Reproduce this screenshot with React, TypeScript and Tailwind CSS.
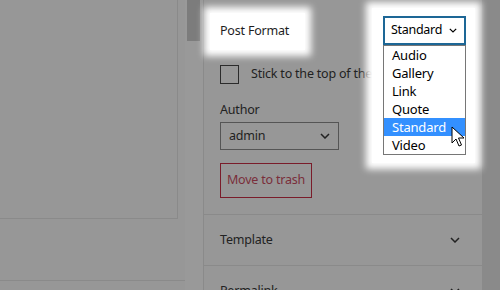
const Chevron = ({ className = '', w = 10 }: { className?: string; w?: number }) => (
  <svg width={w} height={w * 0.6} viewBox="0 0 10 6" className={className}>
    <path d="M1 1l4 4 4-4" fill="none" stroke="currentColor" strokeWidth="1.5" />
  </svg>
);

const formats = ['Audio', 'Gallery', 'Link', 'Quote', 'Standard', 'Video'];

export default function App() {
  return (
    <div className="flex h-[290px] w-[500px] overflow-hidden bg-[#979797] font-['Noto_Sans',sans-serif] text-[12.5px] tracking-[-0.2px] text-[#222]">
      {/* Editor canvas */}
      <div className="flex w-[185px] flex-col">
        <div className="h-[219px] w-[178px] border-b border-r border-[#8a8a8a]" />
        <div className="h-[62px] border-b border-[#8a8a8a]" />
      </div>

      {/* Scrollbar */}
      <div className="w-[18px] bg-[#999999] pl-[2px] pr-[3px]">
        <div className="h-[41px] bg-[#7c7c7c]" />
      </div>

      {/* Sidebar */}
      <aside className="w-[280px] border-x border-[#8a8a8a]">
        <div className="border-b border-[#8a8a8a] px-4 pb-4 pt-[13px]">
          <div className="flex items-start justify-between">
            <div className="-ml-[10px] flex h-[37px] w-[95px] items-center bg-white pl-[10px] text-[#1e1e1e] shadow-[0_0_7px_6px_#fff]">
              Post Format
            </div>

            {/* Format select, open */}
            <div className="relative z-10 mt-[3px] w-[83px]">
              <div className="absolute -left-[11px] -top-[8px] h-[155px] w-[103px] bg-white shadow-[0_0_7px_6px_#fff]" />
              <div className="relative flex h-[29px] items-center justify-between border-2 border-[#1d6796] bg-white pl-[6px] pr-[7px] tracking-[-0.3px] text-black">
                <span>Standard</span>
                <Chevron w={8} />
              </div>
              <ul className="absolute left-0 top-[29px] w-full border border-[#767676] bg-white text-[13px] text-black">
                {formats.map((f) => (
                  <li
                    key={f}
                    className={
                      f === 'Standard'
                        ? 'h-[18px] bg-[#3390ff] pl-[8px] leading-[18px] text-white'
                        : 'h-[18px] pl-[8px] leading-[18px]'
                    }
                  >
                    {f}
                  </li>
                ))}
              </ul>
              {/* Mouse pointer */}
              <svg
                width="13"
                height="21"
                viewBox="0 0 13 21"
                className="absolute left-[68px] top-[110px]"
              >
                <path
                  d="M1 1v16l4-4 3 7 2.5-1-3-7h5.5z"
                  fill="#fff"
                  stroke="#000"
                  strokeWidth="1"
                  strokeLinejoin="round"
                />
              </svg>
            </div>
          </div>

          <div className="mt-[15px] flex items-center gap-3 whitespace-nowrap">
            <div className="h-[19px] w-[19px] shrink-0 border border-[#2b2b2b]" />
            <span>Stick to the top of the blog</span>
          </div>

          <div className="mt-[17px] leading-[18px]">Author</div>
          <div className="mt-[3px] flex h-[28px] w-[119px] items-center justify-between border border-[#555] pl-[8px] pr-[8px]">
            <span>admin</span>
            <Chevron />
          </div>

          <button className="mt-[13px] h-[35px] w-[92px] border border-[#7a1c2a] text-[#7a2e3a]">
            Move to trash
          </button>
        </div>

        <div className="flex h-[51px] items-center justify-between border-b border-[#8a8a8a] pl-4 pr-[22px]">
          <span>Template</span>
          <Chevron />
        </div>
        <div className="flex h-[50px] items-center justify-between pl-4 pr-[22px]">
          <span>Permalink</span>
          <Chevron />
        </div>
      </aside>

      <div className="flex-1 bg-[#8a8a8a]" />
    </div>
  );
}
